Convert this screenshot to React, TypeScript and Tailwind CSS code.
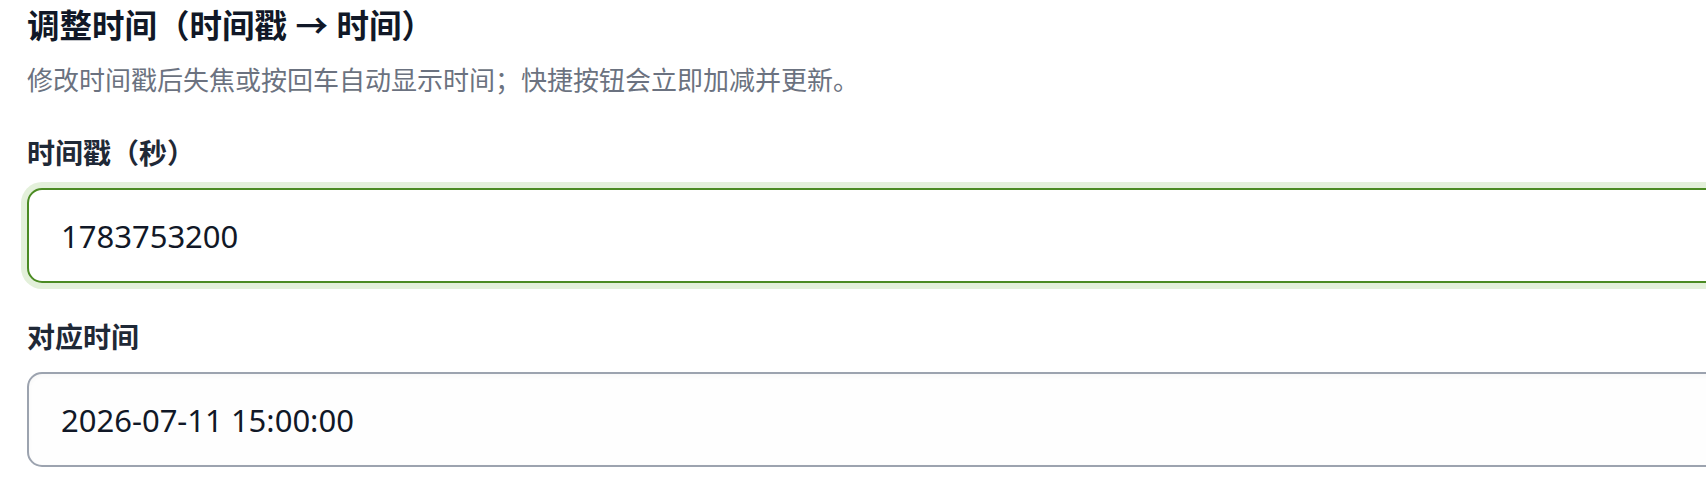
import { useState } from 'react'

const cjk = "font-['Noto_Sans','Noto_Sans_CJK_SC',sans-serif]"

function Field({
  label,
  value,
  onChange,
  active = false,
}: {
  label: string
  value: string
  onChange?: (v: string) => void
  active?: boolean
}) {
  return (
    <div className="flex flex-col">
      <label className="text-[28px] leading-[36px] font-bold text-[#1f2937]">{label}</label>
      <input
        type="text"
        value={value}
        readOnly={!onChange}
        onChange={(e) => onChange?.(e.target.value)}
        className={
          active
            ? 'mt-[17px] h-[95px] w-[1720px] rounded-[15px] border-2 border-[#4b8b23] bg-white pl-[32px] text-[31px] text-[#111827] ring-[6px] ring-[#e3f0da] outline-none'
            : 'mt-[17px] h-[95px] w-[1720px] rounded-[15px] border-2 border-[#9ca3af] bg-[#fefefe] pl-[32px] text-[31px] text-[#111827] shadow-[inset_0_2px_4px_rgba(0,0,0,0.03)] outline-none'
        }
      />
    </div>
  )
}

export default function App() {
  const [ts, setTs] = useState('1783753200')

  return (
    <div className={`h-[493px] w-full overflow-hidden bg-white ${cjk}`}>
      <div className="flex flex-col pt-[6px] pl-[27px]">
        <h2 className="text-[32.5px] leading-[40px] font-bold text-[#111827]">
          调整时间（时间戳 → 时间）
        </h2>
        <p className="mt-[16px] text-[26px] leading-[36px] text-[#6b7280]">
          修改时间戳后失焦或按回车自动显示时间；快捷按钮会立即加减并更新。
        </p>

        <div className="mt-[37px]">
          <Field label="时间戳（秒）" value={ts} onChange={setTs} active />
        </div>
        <div className="mt-[36px]">
          <Field label="对应时间" value="2026-07-11 15:00:00" />
        </div>
      </div>
    </div>
  )
}
